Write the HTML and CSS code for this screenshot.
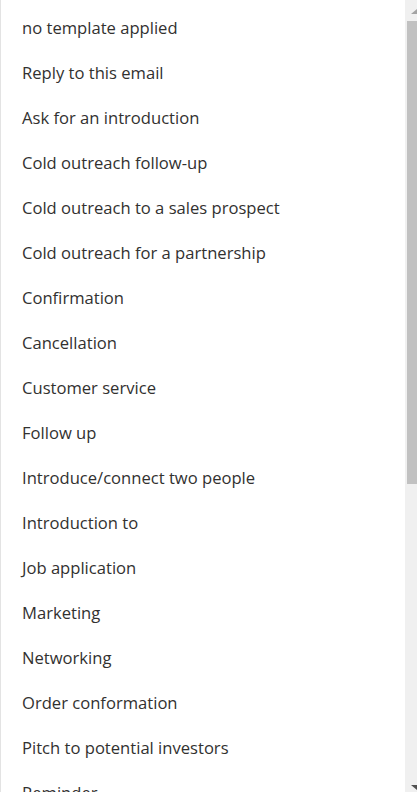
FILE: index.html
```html
<!DOCTYPE html>
<html>
<head>
<meta charset="utf-8">
<link rel="stylesheet" href="styles.css">
</head>
<body>
<div class="frame">
  <ul class="list">
    <li>no template applied</li>
    <li>Reply to this email</li>
    <li>Ask for an introduction</li>
    <li>Cold outreach follow-up</li>
    <li>Cold outreach to a sales prospect</li>
    <li>Cold outreach for a partnership</li>
    <li>Confirmation</li>
    <li>Cancellation</li>
    <li>Customer service</li>
    <li>Follow up</li>
    <li>Introduce/connect two people</li>
    <li>Introduction to</li>
    <li>Job application</li>
    <li>Marketing</li>
    <li>Networking</li>
    <li>Order conformation</li>
    <li>Pitch to potential investors</li>
    <li>Reminder</li>
  </ul>
  <div class="scrollbar">
    <div class="arrow up"></div>
    <div class="thumb"></div>
    <div class="rest"></div>
    <div class="arrow down"></div>
  </div>
</div>
</body>
</html>
```
FILE: styles.css
```css
html, body {
  margin: 0;
  padding: 0;
  background: #ffffff;
  height: 792px;
  overflow: hidden;
}
.frame {
  display: flex;
  height: 792px;
  border-left: 1px solid #e3e3e3;
  box-sizing: border-box;
}
.list {
  flex: 1;
  list-style: none;
  margin: 0;
  padding: 5px 0 0 0;
  overflow: hidden;
  font-family: "Segoe UI", "Open Sans", sans-serif;
  font-size: 16.6px;
  color: #323130;
}
.list li {
  height: 45px;
  line-height: 45px;
  padding-left: 21px;
  white-space: nowrap;
}
.scrollbar {
  width: 12px;
  background: #f0f0f0;
  display: flex;
  flex-direction: column;
  align-items: flex-end;
}
.arrow {
  width: 0;
  height: 0;
  border-left: 6px solid transparent;
}
.arrow.up {
  margin-top: 9px;
  border-bottom: 5px solid #a3a3a3;
  margin-bottom: 7px;
}
.thumb {
  width: 10px;
  height: 463px;
  background: #c1c1c1;
}
.rest {
  flex: 1;
}
.arrow.down {
  border-top: 5px solid #505050;
  margin-bottom: 2px;
}
```
